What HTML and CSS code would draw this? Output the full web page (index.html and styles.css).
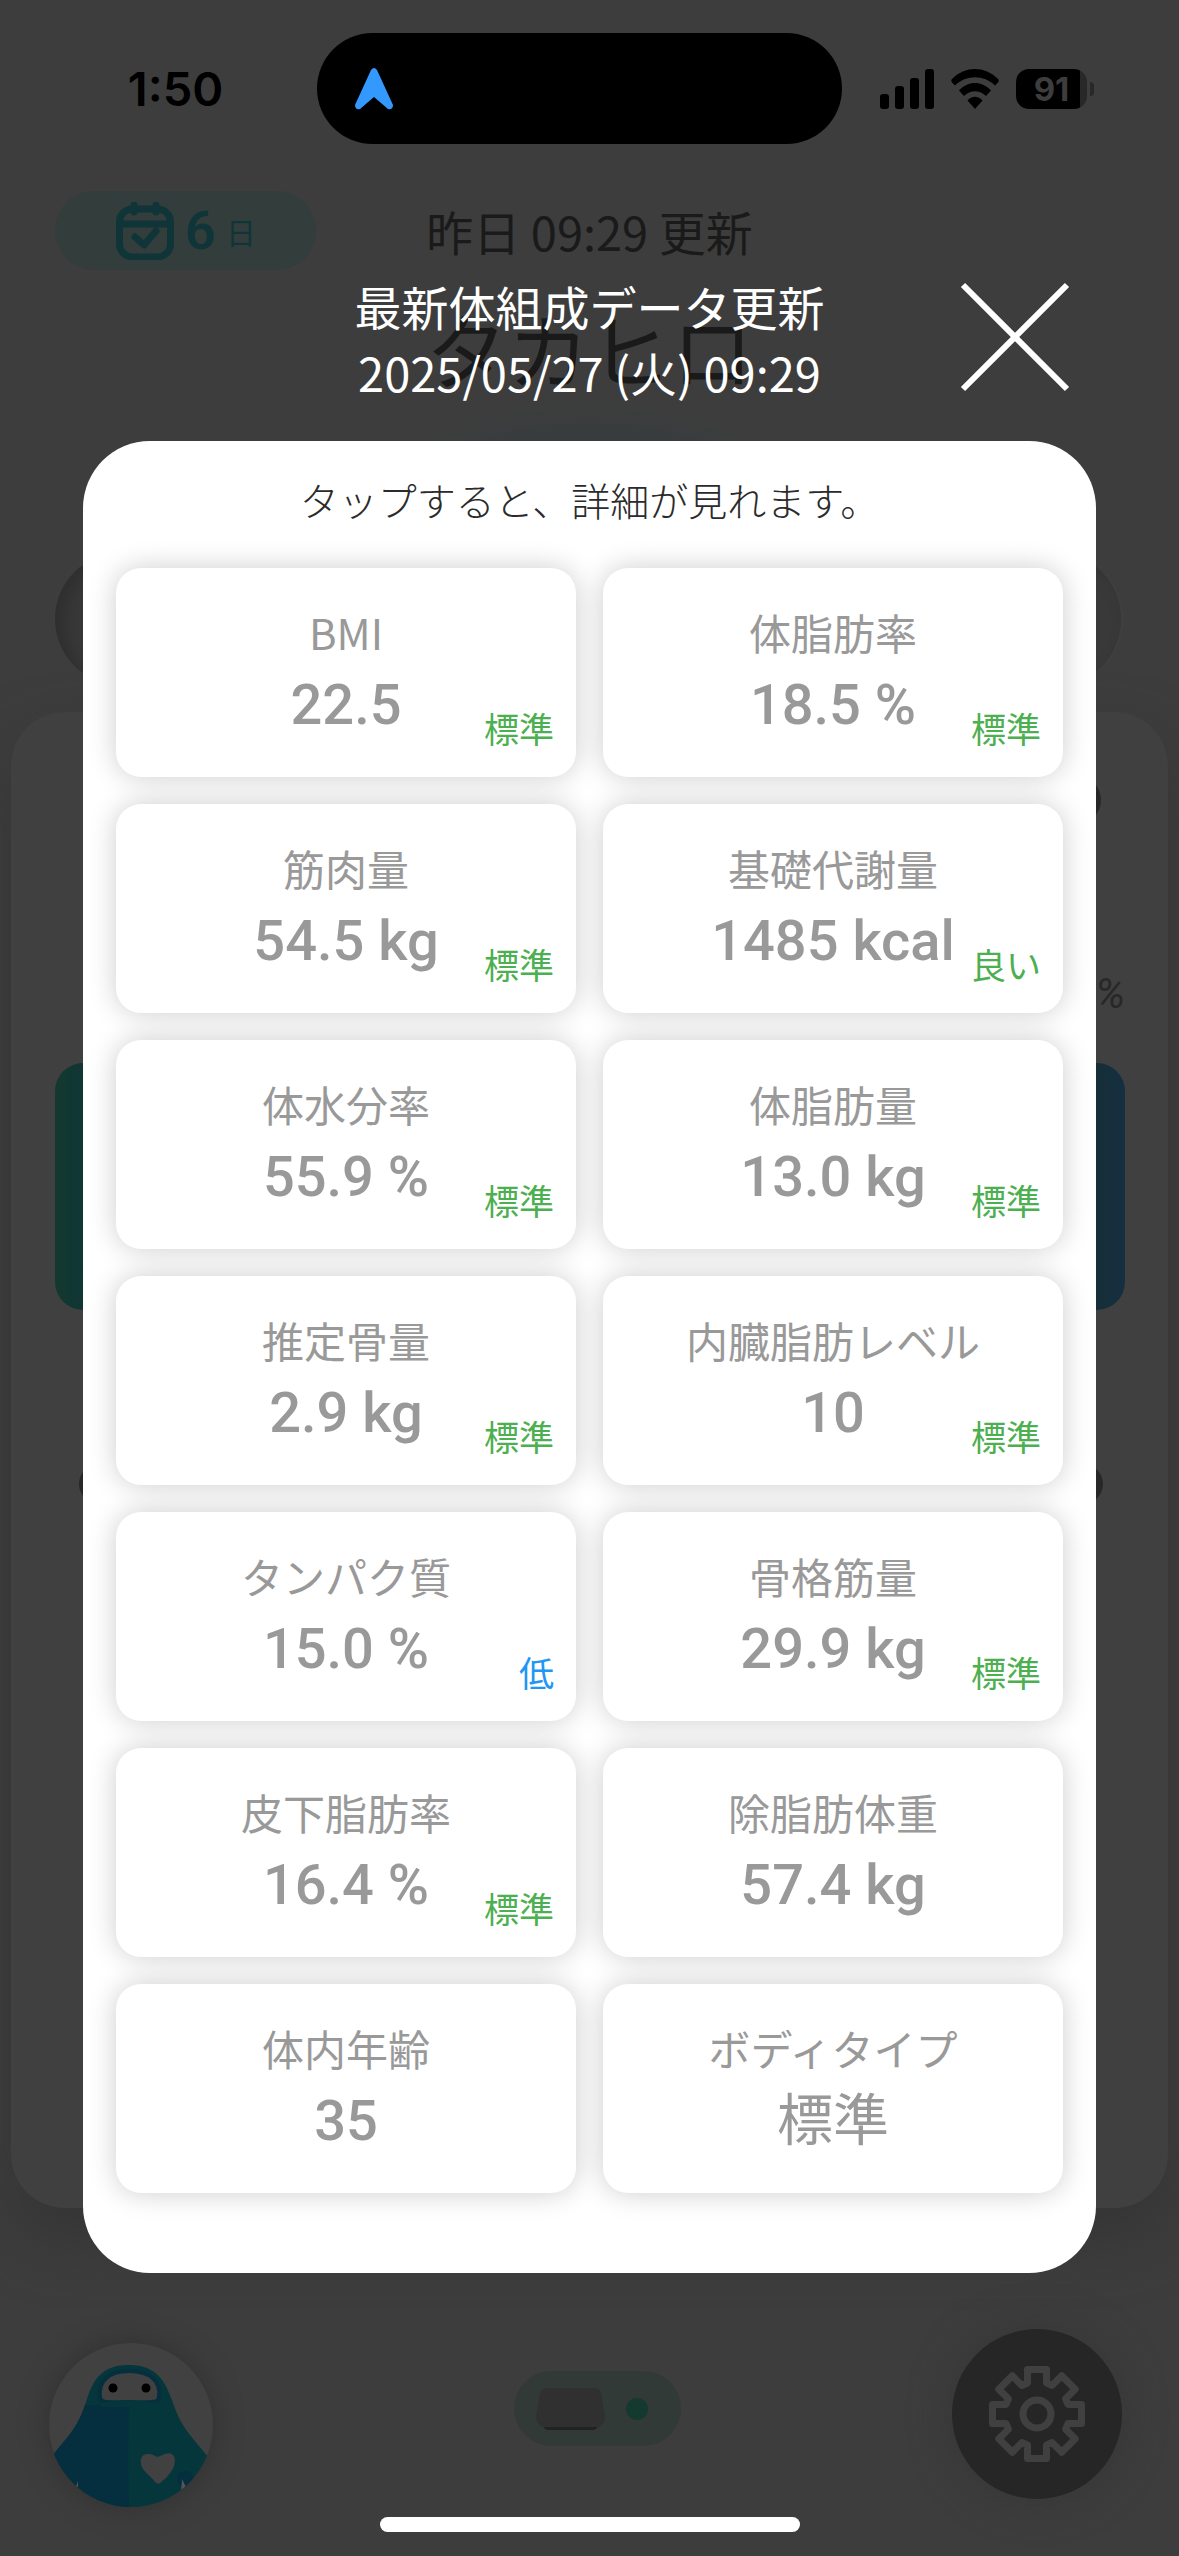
FILE: index.html
```html
<!DOCTYPE html>
<html lang="ja">
<head>
<meta charset="utf-8">
<meta name="viewport" content="width=device-width, initial-scale=1">
<title>体組成データ</title>
<link rel="stylesheet" href="styles.css">
</head>
<body>
<div class="stage">

  <main class="home" aria-hidden="true">
    <header class="home-header">
      <div class="streak">
        <svg class="streak-icon" viewBox="0 0 60 58" fill="none" stroke="currentColor" stroke-linecap="round">
          <rect x="4.500" y="7" width="51" height="48" rx="13" stroke-width="7"/>
          <path d="M5 22H55" stroke-width="7" stroke-linecap="butt"/>
          <path d="M19 3V10M41 3V10" stroke-width="7"/>
          <path d="M20 35L29 43L41 29" stroke-width="7" stroke-linejoin="round"/>
        </svg>
        <span class="streak-count">6</span>
        <span class="streak-unit">日</span>
      </div>
      <p class="updated">昨日 09:29 更新</p>
    </header>
    <h1 class="user-name">タカヒロ</h1>
    <div class="track"></div>
    <section class="panel">
      <div class="panel-top"><span class="knob knob-large"></span></div>
      <p class="percent">%</p>
      <div class="bar"></div>
      <div class="panel-nav"><span class="knob"></span><span class="knob"></span></div>
    </section>
    <footer class="dock">
      <div class="avatar">
        <svg viewBox="0 0 164 164">
          <defs><clipPath id="face"><circle cx="82" cy="82" r="82"/></clipPath></defs>
          <g clip-path="url(#face)">
            <circle cx="82" cy="82" r="82" fill="#414141"/>
            <path d="M4 112C20 92 29 85 38 56C45 34 55 22 80 22C107 22 116 37 124 60C132 84 142 93 160 115L164 164H0Z" fill="#04363b"/>
            <path d="M4 112C20 92 29 84 36 62L80 62C79 90 79 130 80 164H0Z" fill="#052f3e"/>
            <circle cx="136" cy="136" r="8" fill="#052f3e"/>
            <path d="M51 54C49 38 60 28 80 28C101 28 112 38 110 54C109 59 107 60 80 59C53 60 52 59 51 54Z" fill="#414141" stroke="#052f3e" stroke-width="4"/>
            <path d="M50 60Q80 55 111 60L108 64H52Z" fill="#04363b"/>
            <circle cx="64" cy="45" r="4.500" fill="#000"/><circle cx="97" cy="45" r="4.500" fill="#000"/>
            <path d="M92 121C90 111 99 109 106 113C110 115 112 112 116 111C124 108 128 115 125 123C122 131 115 137 111 140Q109 142 106 139C102 133 93 128 92 121Z" fill="#414141"/>
            <path d="M26 146L29 138V150ZM133 136L138 146L132 150Z" fill="#555"/>
          </g>
        </svg>
      </div>
      <div class="device">
        <svg viewBox="0 0 69 42" class="device-icon">
          <path d="M5 36L9 41Q10 42 13 42H56Q59 42 60 41L64 36Z" fill="#222"/>
          <path d="M12 0H57Q64 0 65 5L69 29Q69 33 67 35L64 39H5L2 35Q0 33 0 29L4 5Q5 0 12 0Z" fill="#303030"/>
        </svg>
        <span class="device-dot"></span>
      </div>
      <div class="settings">
        <svg viewBox="-49 -49 98 98" fill="none" stroke="#404040" stroke-width="7" stroke-linejoin="round">
          <path d="M-9.500-31V-44.500H9.500V-31L15.200-28.600L24.700-38.200L38.200-24.700L28.600-15.200L31-9.500H44.500V9.500H31L28.600 15.200L38.200 24.700L24.700 38.200L15.200 28.600L9.500 31V44.500H-9.500V31L-15.200 28.600L-24.700 38.200L-38.200 24.700L-28.600 15.200L-31 9.500H-44.500V-9.500H-31L-28.600-15.200L-38.200-24.700L-24.700-38.200L-15.200-28.600Z"/>
          <circle r="14"/>
        </svg>
      </div>
    </footer>
  </main>

  <div class="dialog" role="dialog" aria-labelledby="dialog-title">
    <header class="dialog-header">
      <h2 class="dialog-title" id="dialog-title">最新体組成データ更新<br>2025/05/27 (火) 09:29</h2>
      <button class="close" type="button" aria-label="閉じる">
        <svg viewBox="0 0 110 110" stroke="#fff" stroke-width="6"><path d="M3 3L107 107M107 3L3 107"/></svg>
      </button>
    </header>
    <section class="sheet">
      <p class="hint">タップすると、詳細が見れます。</p>
      <div class="metrics">
        <button class="metric" type="button"><span class="label">BMI</span><span class="value">22.5</span><span class="status">標準</span></button>
        <button class="metric" type="button"><span class="label">体脂肪率</span><span class="value">18.5 %</span><span class="status">標準</span></button>
        <button class="metric" type="button"><span class="label">筋肉量</span><span class="value">54.5 kg</span><span class="status">標準</span></button>
        <button class="metric" type="button"><span class="label">基礎代謝量</span><span class="value">1485 kcal</span><span class="status">良い</span></button>
        <button class="metric" type="button"><span class="label">体水分率</span><span class="value">55.9 %</span><span class="status">標準</span></button>
        <button class="metric" type="button"><span class="label">体脂肪量</span><span class="value">13.0 kg</span><span class="status">標準</span></button>
        <button class="metric" type="button"><span class="label">推定骨量</span><span class="value">2.9 kg</span><span class="status">標準</span></button>
        <button class="metric" type="button"><span class="label">内臓脂肪レベル</span><span class="value">10</span><span class="status">標準</span></button>
        <button class="metric" type="button"><span class="label">タンパク質</span><span class="value">15.0 %</span><span class="status status-low">低</span></button>
        <button class="metric" type="button"><span class="label">骨格筋量</span><span class="value">29.9 kg</span><span class="status">標準</span></button>
        <button class="metric" type="button"><span class="label">皮下脂肪率</span><span class="value">16.4 %</span><span class="status">標準</span></button>
        <button class="metric" type="button"><span class="label">除脂肪体重</span><span class="value">57.4 kg</span></button>
        <button class="metric" type="button"><span class="label">体内年齢</span><span class="value">35</span></button>
        <button class="metric" type="button"><span class="label">ボディタイプ</span><span class="value value-text">標準</span></button>
      </div>
    </section>
  </div>

  <div class="system">
    <div class="status-bar">
      <span class="clock">1:50</span>
      <div class="island">
        <svg viewBox="0 0 38 42" class="nav-arrow"><path d="M16 2Q19-2 22 2L38 37Q38 42 33 41L19 29L5 41Q0 42 0 37Z" fill="#3399ff"/></svg>
      </div>
      <div class="indicators">
        <svg class="signal" viewBox="0 0 54 40"><rect y="25" width="9" height="15" rx="3"/><rect x="15" y="17" width="9" height="23" rx="3"/><rect x="30" y="9" width="9" height="31" rx="3"/><rect x="45" width="9" height="40" rx="3"/></svg>
        <svg class="wifi" viewBox="0 0 48 40">
          <path d="M1 13.500C0 12 0 11 1 10C14-3.300 34-3.300 47 10C48 11 48 12 47 13.500L44 16.500C33 5.500 15 5.500 4 16.500Z"/>
          <path d="M8 21.500C17 11.500 31 11.500 40 21.500L35 27C29 20.500 19 20.500 13 27Z"/>
          <path d="M16.500 31.500C21 26.500 27 26.500 31.500 31.500L24 40Z"/>
        </svg>
        <div class="battery"><span class="charge">91</span></div>
      </div>
    </div>
    <div class="home-indicator"></div>
  </div>

</div>
</body>
</html>
```
FILE: styles.css
```css
* { box-sizing: border-box; }

body {
  margin: 0;
  background: #3d3d3d;
  font-family: "Noto Sans CJK JP", sans-serif;
}

p, h1, h2 { margin: 0; font-weight: 400; }
svg { display: block; }

button {
  border: 0;
  padding: 0;
  background: none;
  font: inherit;
  cursor: pointer;
}

/* The home screen, the dialog and the system chrome share one grid cell. */
.stage { display: grid; grid-template-columns: 100%; min-height: 100vh; }
.home, .dialog, .system { grid-area: 1 / 1; }

/* Dimmed home screen */
.home {
  padding-top: 191px;
  background: radial-gradient(circle at 50% 800px, #363c3e 350px, #3d3d3d 400px);
}

.home-header {
  display: grid;
  grid-template-columns: 261px 1fr 261px;
  align-items: center;
  padding: 0 55px;
}

.streak {
  display: flex;
  align-items: center;
  justify-content: center;
  gap: 10px;
  height: 79px;
  border-radius: 40px;
  background: #323d3c;
  color: #103539;
}

.streak-icon { width: 60px; height: 58px; }
.streak-count { font-family: Roboto, sans-serif; font-size: 54px; font-weight: 600; line-height: 60px; }
.streak-unit { font-size: 30px; line-height: 60px; }
.updated { color: #1a1a1a; font-size: 47px; line-height: 66px; text-align: center; white-space: nowrap; }

.user-name {
  margin-top: 28px;
  color: #1a1a1a;
  font-size: 82px;
  line-height: 100px;
  text-align: center;
}

.track {
  height: 132px;
  margin: 155px 55px 0;
  border-right: 3px solid #3f3f3f;
  border-radius: 66px;
  background: #393939;
  box-shadow: inset 10px 4px 16px #2f2f2f;
}

.panel {
  height: 1496px;
  margin: 27px 11px 0;
  padding: 63px 43px 0 44px;
  border-radius: 54px;
  background: #404040;
  box-shadow: 0 30px 60px #353535;
}

.panel-top { display: flex; justify-content: flex-end; padding-right: 24px; }
.knob { width: 40px; height: 40px; border-radius: 50%; background: #272727; }
.knob-large { width: 50px; height: 50px; }

.percent {
  margin-top: 144px;
  color: #282828;
  font-family: Roboto, sans-serif;
  font-size: 42px;
  font-style: italic;
  line-height: 50px;
  text-align: right;
}

.bar {
  height: 247px;
  margin-top: 44px;
  border-radius: 28px;
  background: linear-gradient(90deg, #13392f, #103535 28px, #152e36 1040px, #162f41);
}

.panel-nav { display: flex; justify-content: space-between; margin-top: 154px; padding: 0 22px 0 24px; }

.dock {
  display: grid;
  grid-template-columns: 164px 1fr 170px;
  align-items: start;
  padding: 121px 57px 0 49px;
}

.avatar { margin-top: 14px; border-radius: 50%; box-shadow: 0 0 28px #303030; }

.device {
  display: flex;
  align-items: center;
  justify-content: space-between;
  justify-self: center;
  width: 167px;
  height: 75px;
  margin: 42px 0 0 29px;
  padding: 0 33px 0 22px;
  border-radius: 38px;
  background: #323a37;
}

.device-icon { width: 69px; height: 42px; }
.device-dot { width: 22px; height: 22px; border-radius: 50%; background: #14392f; }

.settings {
  display: grid;
  place-items: center;
  height: 170px;
  border-radius: 50%;
  background: #262626;
  box-shadow: 0 0 40px #363636;
}

.settings svg { width: 98px; height: 98px; }

/* Dialog */
.dialog { padding-top: 273px; }

.dialog-header {
  display: grid;
  grid-template-columns: 1fr auto 1fr;
  align-items: start;
  padding: 0 109px;
}

.dialog-title {
  grid-column: 2;
  color: #fff;
  font-size: 47px;
  line-height: 66px;
  text-align: center;
  white-space: nowrap;
}

.close { justify-self: end; width: 110px; height: 110px; margin-top: 9px; }

.sheet {
  margin: 36px 83px 0;
  padding: 28px 33px 80px;
  border-radius: 67px;
  background: #fff;
}

.hint {
  margin-bottom: 39px;
  color: #2b2b2b;
  font-size: 39px;
  font-weight: 300;
  line-height: 60px;
  text-align: center;
}

.metrics { display: grid; grid-template-columns: 1fr 1fr; gap: 27px; }

.metric {
  position: relative;
  display: flex;
  flex-direction: column;
  align-items: center;
  min-height: 209px;
  padding-top: 32px;
  border-radius: 25px;
  background: #fff;
  box-shadow: 0 0 28px rgba(0, 0, 0, 0.2);
  color: #999;
}

.label { font-size: 42px; line-height: 64px; }

.value {
  padding-top: 4px;
  font-family: Roboto, "Noto Sans CJK JP", sans-serif;
  font-size: 56px;
  font-weight: 500;
  line-height: 74px;
}

.value-text { font-weight: 400; }

.status {
  position: absolute;
  right: 22px;
  bottom: 25px;
  color: #4caf50;
  font-size: 35px;
  line-height: 48px;
}

.status-low { color: #2196f3; }

/* System chrome */
.system {
  display: flex;
  flex-direction: column;
  justify-content: space-between;
  align-items: center;
  padding: 33px 0 24px;
  pointer-events: none;
}

.status-bar {
  display: grid;
  grid-template-columns: 1fr 525px 1fr;
  align-items: center;
  width: 100%;
  padding-right: 20px;
}

.clock {
  padding-left: 34px;
  font-family: Inter, sans-serif;
  font-size: 47px;
  font-weight: 600;
  text-align: center;
}

.island {
  display: flex;
  align-items: center;
  height: 111px;
  padding-left: 38px;
  border-radius: 56px;
  background: #000;
}

.nav-arrow { width: 38px; height: 42px; }
.indicators { display: flex; align-items: center; gap: 17px; padding-left: 38px; }
.signal { width: 54px; height: 40px; }
.wifi { width: 48px; height: 40px; }

.battery {
  position: relative;
  width: 71px;
  height: 40px;
  border-radius: 13px;
  background: linear-gradient(90deg, #000 64px, #282828 64px);
}

.battery::after {
  content: "";
  position: absolute;
  left: 74px;
  top: 13px;
  width: 4px;
  height: 14px;
  border-radius: 0 4px 4px 0;
  background: #282828;
}

.charge {
  display: block;
  color: #3d3d3d;
  font-family: Inter, sans-serif;
  font-size: 33px;
  font-weight: 700;
  line-height: 40px;
  text-align: center;
}

.home-indicator { width: 420px; height: 15px; border-radius: 8px; background: #fff; }
```
